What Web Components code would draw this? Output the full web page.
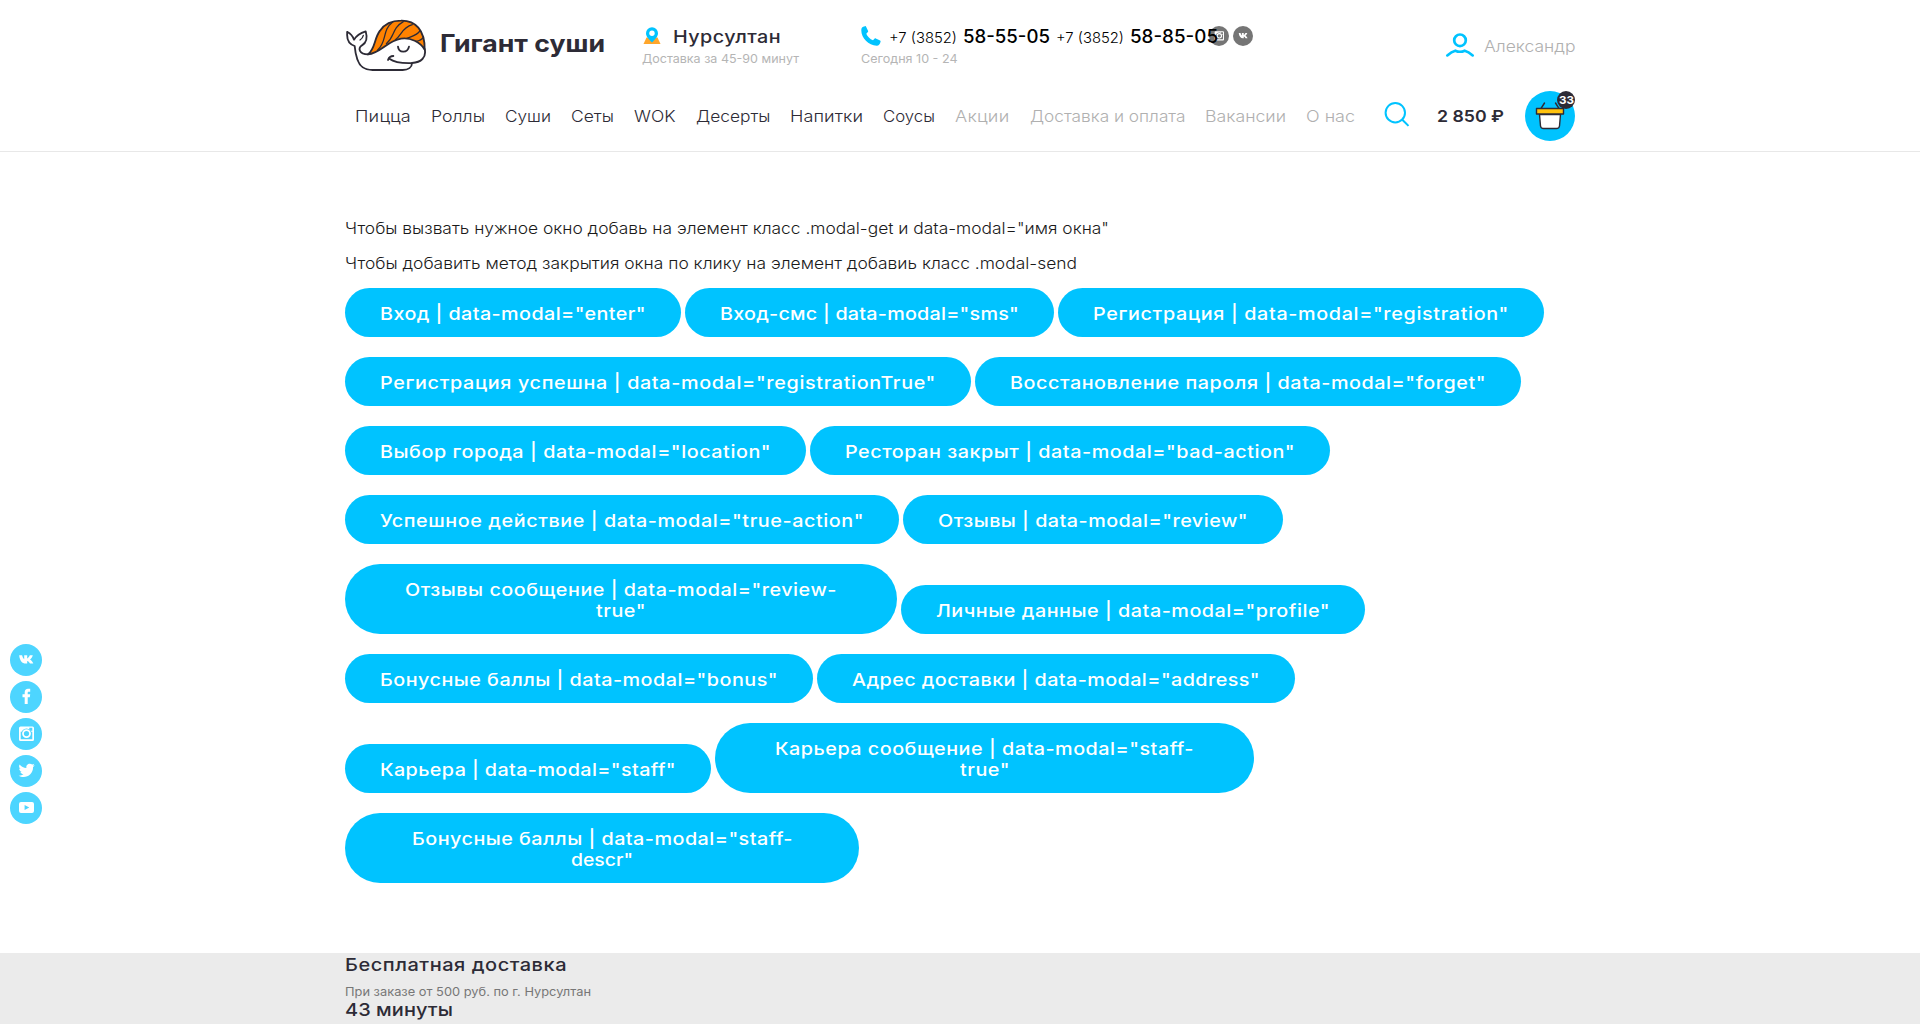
<!DOCTYPE html>
<html lang="ru">
<head>
<meta charset="utf-8">
<title>Гигант суши</title>
<style>
html,body{margin:0;padding:0;background:#fff}
body{height:1024px;overflow:hidden;font-family:Inter,"Open Sans","Noto Sans",sans-serif;font-size:15.5px;color:#2d2b36}
</style>
</head>
<body>
<sushi-app></sushi-app>
<script>
const define = (name, html, after) => {
  const tpl = document.createElement('template');
  tpl.innerHTML = html;
  customElements.define(name, class extends HTMLElement {
    connectedCallback() {
      if (this.shadowRoot) return;
      this.attachShadow({mode: 'open'}).append(tpl.content.cloneNode(true));
      if (after) after(this, this.shadowRoot);
    }
  });
};

/* One line of text widened, then tracked out, to a given width. */
define('fit-text', `<style>
:host{display:block;flex:none;white-space:nowrap}
span{display:inline-block;white-space:pre;transform-origin:0 0}
</style><span><slot></slot></span>`, (el, root) => {
  const w = +el.getAttribute('w'), span = root.querySelector('span');
  el.style.width = w + 'px';
  const natural = span.getBoundingClientRect().width;
  const k = Math.max(1, Math.min(w / natural, 1.13));
  span.style.letterSpacing = ((w / k - natural) / el.textContent.length).toFixed(3) + 'px';
  if (k > 1) span.style.transform = `scaleX(${k.toFixed(4)})`;
});

const glyphs = {
  vk: '<path fill="#fff" d="M7.400 10.400h2.900c.4 1.900 1.200 3.300 2.100 4v-4h3v3.200c1.100-.6 2.100-1.900 2.600-3.200h3c-.4 1.800-1.600 3.300-2.800 4.300 1.500.9 2.600 2.300 3.300 4.100h-3.300c-.6-1.400-1.500-2.400-2.800-2.700v2.700h-1.400c-3.700 0-6.100-3.100-6.600-8.400z" transform="translate(1.800 .8)"/>',
  fb: '<path fill="#fff" d="M14.700 23v-6.800h-2.200v-2.900h2.200v-2c0-2.300 1.300-3.500 3.300-3.500h2.200v2.900h-1.500c-.8 0-1 .4-1 1.100v1.500h2.500l-.4 2.900h-2.100V23z"/>',
  ig: '<path fill="#fff" fill-rule="evenodd" d="M10.500 8.500h12a1.500 1.500 0 0 1 1.500 1.500v11.500a1.500 1.500 0 0 1-1.500 1.500h-12A1.500 1.500 0 0 1 9 21.500V10a1.500 1.500 0 0 1 1.500-1.500zM19.300 9.800v3h3v-3zM10.700 13.800v7.500h11.600v-7.500z"/><circle cx="16.500" cy="15.600" r="5.200" fill="currentColor"/><circle cx="16.500" cy="15.600" r="3.500" fill="none" stroke="#fff" stroke-width="1.800"/>',
  tw: '<path fill="#fff" transform="translate(-1.600 -1.600) scale(1.100)" d="M9.300 20.300c1.700.1 3.200-.4 4.400-1.300-1.400-.1-2.400-1-2.800-2.100h1.300c-1.500-.4-2.400-1.700-2.400-3.100.4.200.9.300 1.300.3-1.400-1-1.800-2.600-.9-4.100 1.600 1.900 3.700 3 6.200 3.200-.5-2.300 1.100-3.900 3-3.900.9 0 1.600.3 2.200.9.700-.1 1.300-.4 1.900-.7-.2.7-.7 1.300-1.300 1.700.6-.1 1.200-.2 1.700-.5-.4.6-.9 1.200-1.500 1.600.2 5.400-4 9.100-8.500 9.100-1.700 0-3.300-.3-4.600-1.100z"/>',
  yt: '<path fill="#fff" fill-rule="evenodd" d="M11 10h11a2 2 0 0 1 2 2v7a2 2 0 0 1-2 2H11a2 2 0 0 1-2-2v-7a2 2 0 0 1 2-2zM14.600 12.900v5.200l4.700-2.600z"/>'
};
define('social-icon', `<style>:host{display:block;flex:none;width:32px;height:32px}svg{display:block;width:100%;height:100%}</style>
<svg viewBox="0 0 32 32"><circle cx="16" cy="16" r="16" fill="currentColor"/><g></g></svg>`, (el, root) => {
  root.querySelector('g').innerHTML = glyphs[el.getAttribute('name')];
});

define('social-rail', `<style>
:host{position:fixed;left:10px;top:644px;display:flex;flex-direction:column;gap:5px;color:#4dd5ff}
</style>
<social-icon name="vk"></social-icon><social-icon name="fb"></social-icon><social-icon name="ig"></social-icon><social-icon name="tw"></social-icon><social-icon name="yt"></social-icon>`);

define('brand-logo', `<style>
:host{display:flex;flex:none;width:297px}
svg{display:block;width:82px;height:53px;margin-top:19px}
fit-text{margin:28.500px 0 0 13px;font-size:24px;font-weight:700;line-height:30px}
</style>
<svg viewBox="45 57 246 159" fill="none" stroke="#2d2b36" stroke-width="5.500" stroke-linecap="round" stroke-linejoin="round">
<path d="M114 163C136 146 132 116 150 92C165 70 188 62 213 62C256 61 285 90 284 149C272 127 240 111 213 116C171 123 151 160 114 163Z" fill="#ff8200"/>
<path d="M52 96C49 119 56 132 74 138C75 150 77 164 82 178C90 201 103 210 128 210H218C235 210 246 202 246 189"/>
<path d="M52 96Q66 102 72 119Q82 102 107 94Q116 125 96 136C83 145 87 163 114 163"/>
<path d="M90 120Q98 115 100 106" stroke-width="4"/>
<path d="M284 147C290 173 273 187 246 189C218 190 193 187 178 176M174 180Q178 168 190 168"/>
<path d="M204 140C206 160 233 160 237 140"/>
<path d="M143 150C172 124 155 92 188 66M169 131C196 108 184 86 220 65M196 119C216 105 214 84 247 74M230 115C248 108 262 106 270 92M258 124Q274 121 280 112" stroke-width="3.800"/>
</svg><fit-text w="165">Гигант суши</fit-text>`);

define('city-picker', `<style>
:host{display:block;flex:none;width:219px}
.row{display:flex;height:24px;margin-top:25px}
svg{flex:none;width:18px;height:18px;margin:2px 12px 0 1px}
.city{font-size:17.500px;font-weight:500;line-height:24px}
.note{font-size:11.700px;line-height:18px;color:#b5b5b5;margin-top:1px}
</style>
<div class="row"><svg viewBox="0 0 18 18"><path d="M3.500 10.500h11l3 6.500H.5z" fill="#ffa62b"/><path d="M9 .2a6 6 0 0 1 6 6c0 3.300-2.500 5.500-6 9.300C5.500 11.700 3 9.500 3 6.200a6 6 0 0 1 6-6z" fill="#00c3ff"/><circle cx="9" cy="6.200" r="2.700" fill="#fff"/></svg>
<fit-text class="city" w="108">Нурсултан</fit-text></div>
<fit-text class="note" w="157">Доставка за 45-90 минут</fit-text>`);

define('phone-list', `<style>
:host{display:block;flex:none;width:348px}
.row{display:flex;height:24px;margin-top:25px;color:#000}
.row>svg{flex:none;width:20px;height:20px;margin:1px 8px 0 0}
.code{font-size:14.300px;font-weight:300;line-height:26px;margin-right:6px}
.num{font-size:18px;font-weight:500;line-height:23px;margin-right:5.500px}
.note{font-size:11.700px;line-height:18px;color:#b5b5b5;margin-top:1px}
</style>
<div class="row"><svg viewBox="0 0 20 20"><path d="M2.200.8 4 .2c.5-.2.9 0 1.100.5l2 4.300c.2.400.1.800-.2 1.100L5.300 7.700c1 2.600 3.700 5.300 6.700 6.600l1.700-1.700c.3-.3.700-.4 1.100-.2l4.300 2c.5.200.6.600.5 1.100-.5 2.600-1.700 4.200-3.900 4.200C7.500 19.500.3 11.800.3 4.500.3 2.500.9 1.300 2.200.8z" fill="#00c3ff"/></svg>
<fit-text class="code" w="68">+7 (3852)</fit-text><fit-text class="num" w="87">58-55-05</fit-text><fit-text class="code" w="68">+7 (3852)</fit-text><fit-text class="num" w="88">58-85-05</fit-text></div>
<fit-text class="note" w="96.500">Сегодня 10 - 24</fit-text>`);

define('user-link', `<style>
:host{display:flex;margin-left:auto;color:#b0b0b0}
svg{width:30px;height:26px;margin:32.500px 9px 0 0}
fit-text{margin-top:36px;line-height:20px;font-weight:300;font-size:16px}
</style>
<svg viewBox="0 0 30 26" fill="none" stroke="#00c3ff" stroke-width="2.700" stroke-linecap="round" stroke-linejoin="round"><circle cx="15" cy="7.300" r="5.800"/><path d="M2.300 22.400C6 19.200 8 18.300 10.300 17.700Q15 19.800 19.700 17.700C22 18.300 24 19.200 27.700 22.400"/></svg>
<fit-text w="91.500">Александр</fit-text>`);

define('main-nav', `<style>
:host{display:flex;gap:20px;margin:15px 0 0 10px;line-height:20px;font-weight:300;font-size:16px}
.m{color:#b0b0b0}
</style>
<fit-text w="56">Пицца</fit-text><fit-text w="54">Роллы</fit-text><fit-text w="46">Суши</fit-text><fit-text w="43">Сеты</fit-text><fit-text w="41.500">WOK</fit-text><fit-text w="74.500">Десерты</fit-text><fit-text w="73">Напитки</fit-text><fit-text w="52">Соусы</fit-text><fit-text class="m" w="54.500">Акции</fit-text><fit-text class="m" w="155.500">Доставка и оплата</fit-text><fit-text class="m" w="81">Вакансии</fit-text><fit-text class="m" w="49">О нас</fit-text>`);

define('cart-button', `<style>
:host{display:block;position:relative;width:50px;height:50px;margin-left:auto}
svg{display:block}
.badge{position:absolute;left:32px;top:0;width:18px;height:18px;border-radius:9px;background:#2d2b36;color:#fff;font-size:11px;font-weight:700;line-height:18px;display:flex;justify-content:center}
</style>
<svg width="50" height="50" viewBox="0 0 50 50"><circle cx="25" cy="25" r="25" fill="#00c3ff"/>
<g stroke="#2d2b36" stroke-width="1.400" stroke-linejoin="round" stroke-linecap="round"><path d="M16 17.500 19.500 12M34 17.500 30.500 12" fill="none"/><path d="M14.500 23.500h21L34.500 35q-.3 2.500-3 2.500h-13q-2.700 0-3-2.500z" fill="#fff"/><path d="M11.500 17.500h27v5.500h-27z" fill="#ffc20e"/></g></svg>
<div class="badge"><fit-text w="15">33</fit-text></div>`);

define('site-header', `<style>
:host{display:block;height:151px;border-bottom:1px solid #e8e8e8}
.wrap{width:1230px;margin:0 auto}
.top{display:flex;height:91px}
.soc{display:flex;gap:4px;margin-top:26px;color:#757575}
.soc social-icon{width:20px;height:20px}
.bottom{display:flex;height:60px}
.find{width:26px;height:26px;margin:10px 0 0 29px}
.price{margin:15px 0 0 27px;font-size:16.500px;font-weight:600;line-height:20px}
phone-list{position:relative;z-index:1}
</style>
<div class="wrap"><div class="top"><brand-logo></brand-logo><city-picker></city-picker><phone-list></phone-list>
<div class="soc"><social-icon name="ig"></social-icon><social-icon name="vk"></social-icon></div><user-link></user-link></div>
<div class="bottom"><main-nav></main-nav>
<svg class="find" viewBox="0 0 26 26" fill="none" stroke="#00c3ff" stroke-width="2"><circle cx="11.300" cy="11.700" r="9.700"/><path d="m18.300 18.700 6.200 6.200"/></svg>
<fit-text class="price" w="67">2 850 ₽</fit-text><cart-button></cart-button></div></div>`);

define('modal-button', `<style>
:host{display:flex;flex-direction:column;align-items:center;flex:none;box-sizing:border-box;padding:15px 0 13px;border-radius:35px;background:#00c3ff;color:#fff;font-size:17.500px;font-weight:500;line-height:21px;letter-spacing:0}
</style><slot></slot>`, el => { el.style.width = el.getAttribute('w') + 'px'; });

define('modal-list', `<style>
:host{display:block;width:1230px;margin:0 auto;padding-top:66px;height:735px}
p{margin:0 0 15px;line-height:20px;color:#1a1a1a;font-weight:300;font-size:16px}
.row{display:flex;align-items:flex-end;gap:4px;margin-bottom:20px}
</style>
<p><fit-text w="764">Чтобы вызвать нужное окно добавь на элемент класс .modal-get и data-modal="имя окна"</fit-text></p>
<p><fit-text w="732">Чтобы добавить метод закрытия окна по клику на элемент добавиь класс .modal-send</fit-text></p>
<div class="row"><modal-button w="336"><fit-text w="266">Вход | data-modal="enter"</fit-text></modal-button><modal-button w="369"><fit-text w="299">Вход-смс | data-modal="sms"</fit-text></modal-button><modal-button w="486"><fit-text w="416">Регистрация | data-modal="registration"</fit-text></modal-button></div>
<div class="row"><modal-button w="626"><fit-text w="556">Регистрация успешна | data-modal="registrationTrue"</fit-text></modal-button><modal-button w="546"><fit-text w="476">Восстановление пароля | data-modal="forget"</fit-text></modal-button></div>
<div class="row"><modal-button w="461"><fit-text w="391">Выбор города | data-modal="location"</fit-text></modal-button><modal-button w="520"><fit-text w="450">Ресторан закрыт | data-modal="bad-action"</fit-text></modal-button></div>
<div class="row"><modal-button w="554"><fit-text w="484">Успешное действие | data-modal="true-action"</fit-text></modal-button><modal-button w="380"><fit-text w="310">Отзывы | data-modal="review"</fit-text></modal-button></div>
<div class="row"><modal-button w="552"><fit-text w="432">Отзывы сообщение | data-modal="review-</fit-text><fit-text w="50">true"</fit-text></modal-button><modal-button w="464"><fit-text w="394">Личные данные | data-modal="profile"</fit-text></modal-button></div>
<div class="row"><modal-button w="468"><fit-text w="398">Бонусные баллы | data-modal="bonus"</fit-text></modal-button><modal-button w="478"><fit-text w="408">Адрес доставки | data-modal="address"</fit-text></modal-button></div>
<div class="row"><modal-button w="366"><fit-text w="296">Карьера | data-modal="staff"</fit-text></modal-button><modal-button w="539"><fit-text w="419">Карьера сообщение | data-modal="staff-</fit-text><fit-text w="50">true"</fit-text></modal-button></div>
<div class="row"><modal-button w="514"><fit-text w="381">Бонусные баллы | data-modal="staff-</fit-text><fit-text w="62">descr"</fit-text></modal-button></div>`);

define('delivery-bar', `<style>
:host{display:block;height:71px;background:#ebebeb;overflow:hidden}
.wrap{width:1230px;margin:0 auto}
.h{font-size:17.700px;font-weight:500;line-height:22px;padding-top:1px}
.n{font-size:11.700px;line-height:16px;color:#777;margin:8px 0 -2px}
</style>
<div class="wrap"><fit-text class="h" w="222">Бесплатная доставка</fit-text><fit-text class="n" w="246">При заказе от 500 руб. по г. Нурсултан</fit-text><fit-text class="h" w="108">43 минуты</fit-text></div>`);

define('sushi-app', `<style>:host{display:block}</style>
<site-header></site-header><modal-list></modal-list><delivery-bar></delivery-bar><social-rail></social-rail>`);
</script>
</body>
</html>
